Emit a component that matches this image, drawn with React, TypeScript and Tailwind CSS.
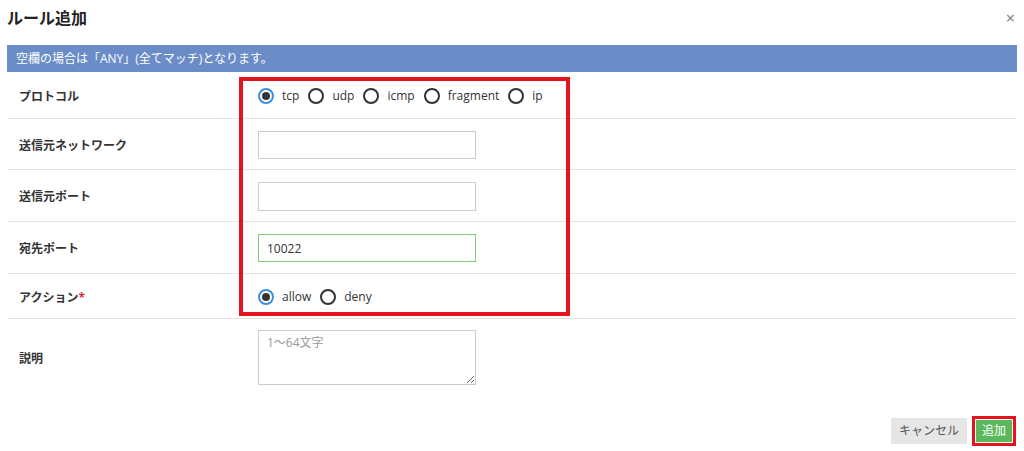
import React from 'react';

const font = { fontFamily: '"Open Sans", "Noto Sans CJK JP", sans-serif' };

const Radio: React.FC<{ label: string; checked?: boolean }> = ({ label, checked }) => (
  <label className="flex items-center gap-2 mr-[9px]">
    {checked ? (
      <span className="w-4 h-4 rounded-full border-2 border-[#3d8ee0] flex items-center justify-center">
        <span className="w-2 h-2 rounded-full bg-[#333]" />
      </span>
    ) : (
      <span className="w-4 h-4 rounded-full border-2 border-[#333]" />
    )}
    <span className="text-[12px] text-[#333]">{label}</span>
  </label>
);

const Row: React.FC<{ label: React.ReactNode; h: string; children: React.ReactNode }> = ({ label, h, children }) => (
  <div className={`flex items-center border-b border-[#e5e5e5] ${h}`}>
    <div className="w-[251px] pl-3 pt-[3px] text-[12px] font-bold text-[#333]">{label}</div>
    <div className="flex items-center pt-[1px]">{children}</div>
  </div>
);

export default function App() {
  return (
    <div className="w-[1024px] h-[451px] bg-white relative overflow-hidden" style={font}>
      <div className="px-[7px]">
        {/* Header */}
        <div className="h-[45px] flex items-start justify-between pt-[6px]">
          <h2 className="text-[16px] font-bold text-[#222]">ルール追加</h2>
          <span className="text-[#777] text-[16px] leading-none mt-[4px] mr-[2px]">×</span>
        </div>

        {/* Notice */}
        <div className="h-[27px] bg-[#6a8cc7] text-white text-[12px] flex items-center pl-[9px]">
          空欄の場合は「ANY」(全てマッチ)となります。
        </div>

        {/* Form rows */}
        <Row label="プロトコル" h="h-[47px]">
          <Radio label="tcp" checked />
          <Radio label="udp" />
          <Radio label="icmp" />
          <Radio label="fragment" />
          <Radio label="ip" />
        </Row>
        <Row label="送信元ネットワーク" h="h-[51px]">
          <input className="w-[218px] h-[28px] border border-[#ccc] outline-none px-2 text-[12px]" />
        </Row>
        <Row label="送信元ポート" h="h-[52px]">
          <input className="w-[218px] h-[29px] border border-[#ccc] outline-none px-2 text-[12px]" />
        </Row>
        <Row label="宛先ポート" h="h-[52px]">
          <input
            defaultValue="10022"
            className="w-[218px] h-[28px] border border-[#7fcc7f] outline-none px-2 text-[12px] text-[#333]"
          />
        </Row>
        <Row
          label={
            <>
              アクション<span className="text-[#d9302c]">*</span>
            </>
          }
          h="h-[45px]"
        >
          <Radio label="allow" checked />
          <Radio label="deny" />
        </Row>
        <div className="flex h-[80px]">
          <div className="w-[251px] pl-3 pt-[31px] text-[12px] font-bold text-[#333]">説明</div>
          <div className="pt-[11px]">
            <textarea
              placeholder="1～64文字"
              className="w-[218px] h-[55px] border border-[#ccc] outline-none px-2 py-[3px] text-[12px] placeholder-[#999] block"
            />
          </div>
        </div>

        {/* Footer */}
        <div className="flex justify-end items-center gap-[5px] mt-[17px] pr-[1px]">
          <button className="h-[26px] w-[76px] bg-[#e6e6e6] text-[#555] text-[12px]">キャンセル</button>
          <div className="border-[3px] border-[#e3141d] p-[1px]">
            <button className="h-[22px] w-[36px] bg-[#5cb85c] text-white text-[12px] block">追加</button>
          </div>
        </div>
      </div>

      {/* Highlight annotation */}
      <div className="absolute left-[239px] top-[77px] w-[331px] h-[239px] border-[4px] border-[#e3141d] pointer-events-none" />
    </div>
  );
}
